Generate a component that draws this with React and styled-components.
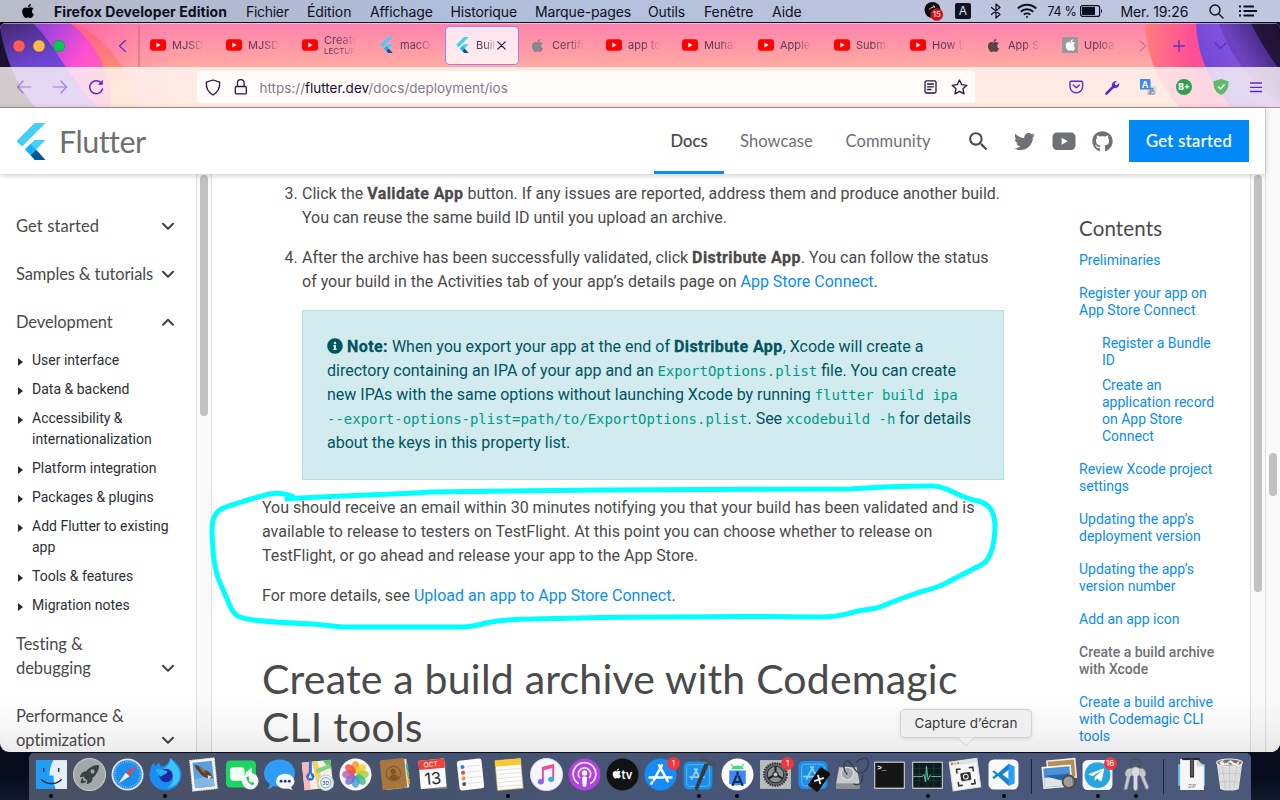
import React from 'react';
import styled, { createGlobalStyle, css } from 'styled-components';
import { FaApple, FaTwitter, FaGithub, FaInfoCircle, FaTelegramPlane } from 'react-icons/fa';
import { MdSearch } from 'react-icons/md';
import { IoRocketSharp } from 'react-icons/io5';

const Global = createGlobalStyle`
  *, *::before, *::after { box-sizing: border-box; }
  html, body { margin: 0; padding: 0; overflow: hidden; }
  svg { display: block; flex: none; }
`;

const roboto = "Roboto, 'Noto Sans', sans-serif";
const product = "Lato, 'Open Sans', sans-serif";
const system = "Inter, 'Noto Sans', sans-serif";
const blue = '#0a8cf5';

/* ---------- desktop ---------- */

const Desktop = styled.div`
  position: relative;
  width: 1280px;
  height: 800px;
  overflow: hidden;
  display: flex;
  flex-direction: column;
  background: linear-gradient(180deg, #0b1226, #060c1b 97%, #10182d);
  font-family: ${system};
`;

const MenuBar = styled.header`
  height: 22px;
  flex: none;
  display: flex;
  align-items: center;
  padding-left: 20px;
  background: linear-gradient(90deg, #b9bccb 0%, #b2b9cf 16%, #afbedb 35%, #bcc4dd 70%, #bec8df 100%);
  color: #0a1020;
  font-size: 14px;
`;

const MenuItem = styled.span`
  width: ${p => p.$w}px;
  flex: none;
  white-space: nowrap;
  font-weight: ${p => (p.$bold ? 700 : 400)};
  letter-spacing: ${p => p.$ls || 0}px;
  font-size: ${p => p.$size || 14}px;
`;

const MenuIcon = styled.span`
  width: ${p => p.$w}px;
  flex: none;
  display: flex;
`;

const Window = styled.section`
  position: relative;
  flex: none;
  width: 1280px;
  height: 729px;
  margin-top: 1px;
  border-radius: 6px 6px 9px 9px;
  overflow: hidden;
  display: flex;
  flex-direction: column;
  background: #fff;
`;

/* ---------- browser chrome ---------- */

const Chrome = styled.div`
  position: relative;
  height: 85px;
  flex: none;
  border-bottom: 1px solid #b98a8c;
  background: linear-gradient(180deg, #ff82ad 0%, #ffaaa2 52%, #ffb48c 100%);
`;

const ThemeArt = styled.svg`
  position: absolute;
  left: 0;
  top: 0;
`;

const ChromeRows = styled.div`
  position: relative;
  display: flex;
  flex-direction: column;
`;

const TabRow = styled.div`
  height: 44px;
  display: flex;
  align-items: center;
  border-top: 1px solid rgba(255, 255, 255, 0.45);
`;

const Lights = styled.div`
  display: flex;
  gap: 8px;
  padding-left: 13px;
  width: 118px;
`;

const Light = styled.span`
  width: 12px;
  height: 12px;
  border-radius: 50%;
  background: ${p => p.$c};
  box-shadow: inset 0 0 0 0.5px rgba(0, 0, 0, 0.25);
`;

const TabDivider = styled.span`
  width: 2px;
  height: 42px;
  margin: 0 1px 0 9px;
  background: rgba(190, 90, 110, 0.4);
`;

const Tab = styled.div`
  width: 76px;
  height: 37px;
  flex: none;
  margin-top: -1px;
  display: flex;
  align-items: center;
  padding-left: 9px;
  border-radius: 4px;
  ${p => p.$active && css`
    width: 72px;
    margin-right: 3px;
    margin-left: 1px;
    padding-left: 8px;
    background: rgba(255, 250, 252, 0.82);
    box-shadow: 0 0 0 1px #a97df2;
  `}
`;

const TabLabel = styled.span`
  width: ${p => (p.$narrow ? 21 : 36)}px;
  margin-left: 6px;
  overflow: hidden;
  white-space: nowrap;
  font-size: 11px;
  line-height: 12px;
  letter-spacing: 0;
  color: #66375a;
  mask-image: linear-gradient(90deg, #000 45%, transparent ${p => (p.$narrow ? 100 : 90)}%);
  small { display: block; font-size: 8px; line-height: 10px; letter-spacing: 0; }
`;

const Slot = styled.span`
  width: ${p => p.$w}px;
  flex: none;
  display: flex;
  justify-content: ${p => p.$align || 'flex-start'};
  align-items: center;
`;

const NavRow = styled.div`
  height: 40px;
  display: flex;
  align-items: center;
  padding-left: 16px;
  background: rgba(255, 250, 246, 0.8);
`;

const UrlBar = styled.div`
  width: 778px;
  height: 32px;
  flex: none;
  display: flex;
  align-items: center;
  padding-left: 8px;
  border-radius: 4px;
  background: #fffcfa;
`;

const Url = styled.span`
  flex: 1;
  padding-top: 1px;
  font-size: 13.5px;
  color: #84798f;
  b { font-weight: 400; color: #1d0b30; }
`;

/* ---------- page ---------- */

const Page = styled.div`
  flex: 1;
  display: flex;
  min-height: 0;
`;

const Site = styled.div`
  position: relative;
  flex: 1;
  display: flex;
  flex-direction: column;
  min-width: 0;
`;

const SiteHeader = styled.div`
  position: relative;
  z-index: 1;
  height: 66px;
  flex: none;
  display: flex;
  align-items: center;
  padding-left: 16px;
  background: #fff;
  box-shadow: 0 1px 6px rgba(0, 0, 0, 0.22);
  font-family: ${product};
`;

const Wordmark = styled.span`
  width: 595px;
  margin-left: 13px;
  font-size: 30.5px;
  line-height: 36px;
  letter-spacing: -0.5px;
  color: #6d7073;
`;

const NavLink = styled.a`
  height: 66px;
  width: ${p => p.$w}px;
  flex: none;
  padding-left: ${p => (p.$active ? 16.5 : 16)}px;
  line-height: 67px;
  font-size: 16.5px;
  letter-spacing: ${p => p.$ls || 0}px;
  color: ${p => (p.$active ? '#3f4245' : '#6d7073')};
  -webkit-text-stroke: ${p => (p.$active ? '0.2px' : '0')};
  box-shadow: ${p => (p.$active ? `inset 0 -3px 0 ${blue}` : 'none')};
`;

const StartButton = styled.button`
  width: 120px;
  height: 42px;
  flex: none;
  border: 0;
  padding: 0;
  background: #0389f7;
  color: #fff;
  font: 400 16.5px ${product};
  -webkit-text-stroke: 0.2px;
  letter-spacing: 0.4px;
`;

const Body = styled.div`
  flex: 1;
  display: flex;
  min-height: 0;
  overflow: hidden;
`;

const Sidebar = styled.nav`
  width: 196px;
  flex: none;
  padding: 28px 0 0 16px;
`;

const Section = styled.div`
  display: flex;
  justify-content: space-between;
  align-items: flex-end;
  width: 159px;
  padding: 12px 0;
  font: 400 16.5px/24px ${product};
  letter-spacing: ${p => p.$ls || 0}px;
  color: #4a4a4a;
  white-space: pre-line;
  svg { margin-bottom: 6px; }
`;

const SubItem = styled.div`
  display: flex;
  gap: 9px;
  padding: 4px 0 4px 2px;
  font: 400 14px/21px ${roboto};
  color: #2b2f33;
  white-space: pre-line;
  &::before {
    content: '';
    margin-top: 7.5px;
    width: 0;
    height: 0;
    flex: none;
    border: 4.5px solid transparent;
    border-left: 5px solid #2b2b2b;
    border-right: 0;
  }
`;

const Track = styled.div`
  width: ${p => p.$w || 15}px;
  flex: none;
  padding: ${p => p.$top}px 0 0 3px;
  background: #fafafa;
  border: solid #dedede;
  border-width: 0 ${p => (p.$closed ? 1 : 0)}px 0 1px;
`;

const Thumb = styled.div`
  width: 8px;
  height: ${p => p.$h}px;
  border-radius: 4px;
  background: #c1c1c1;
`;

const Article = styled.main`
  width: 867px;
  flex: none;
  padding: 8px 0 0 50px;
  font: 400 16px/24px ${roboto};
  color: #4a4a4a;
  white-space: nowrap;
  a { color: ${blue}; }
  b { font-weight: 700; letter-spacing: 0.42px; -webkit-text-stroke: 0.3px; }
`;

const Step = styled.div`
  display: flex;
  margin-bottom: 16px;
`;

const StepNumber = styled.span`
  width: 40px;
  padding-left: 22.5px;
`;

const P = styled.p`
  margin: 0 0 16px;
`;

const Note = styled.aside`
  width: 702px;
  margin: 0 0 16px 40px;
  padding: 24px;
  border: 1px solid #b4dfe5;
  background: #d1ebef;
  color: #00545f;
  svg { display: inline-block; vertical-align: -2px; }
  code { font: 14px/20px 'DejaVu Sans Mono', monospace; letter-spacing: -0.02px; color: #009b85; }
`;

const H2 = styled.h2`
  margin: 47px 0 0;
  font: 400 41px/48px ${product};
  letter-spacing: 0.21px;
  color: #4a4a4a;
`;

const Toc = styled.aside`
  width: 171px;
  flex: none;
  padding-top: 40px;
  font: 400 14px/17px ${roboto};
  color: ${blue};
  white-space: pre;
`;

const TocTitle = styled.div`
  font: 400 20.5px/29px ${product};
  letter-spacing: 0.15px;
  color: #4a4a4a;
  margin-bottom: 1px;
`;

const TocItem = styled.div`
  padding: ${p => (p.$sub ? '0 0 8px 23px' : '8px 0')};
  ${p => p.$active && css`
    color: #6d7073;
    font-weight: 500;
  `}
`;

const TocGroup = styled.div`
  padding-top: 8px;
`;

const BottomFade = styled.div`
  position: absolute;
  left: 0;
  right: 0;
  bottom: 0;
  height: 56px;
  background: linear-gradient(180deg, rgba(0, 0, 0, 0), rgba(0, 0, 0, 0.035) 60%, rgba(0, 0, 0, 0.08));
`;

const Scribble = styled.svg`
  position: absolute;
  left: 200px;
  top: 476px;
`;

const Tooltip = styled.div`
  position: absolute;
  left: 900px;
  top: 709px;
  width: 132px;
  height: 29px;
  border: 1px solid #d2d2d2;
  border-radius: 5px;
  background: #efefef;
  box-shadow: 0 1px 4px rgba(0, 0, 0, 0.12);
  font-size: 13.5px;
  line-height: 27px;
  letter-spacing: 0.08px;
  text-align: center;
  color: #3b3b3b;
  white-space: nowrap;
  svg { position: absolute; left: 56px; top: 27px; }
`;

/* ---------- dock ---------- */

const DockBar = styled.footer`
  width: 1222px;
  height: 47px;
  flex: none;
  margin: 1px 0 0 29px;
  padding: 5px 3px 0;
  display: flex;
  border-radius: 5px 5px 0 0;
  background: linear-gradient(90deg, #4a5065, #46536e 30%, #48567a 70%, #4b5879);
`;

const DockSlot = styled.div`
  position: relative;
  width: 38.12px;
  height: 42px;
  flex: none;
  display: flex;
  flex-direction: column;
  align-items: center;
  ${p => p.$running && css`
    &::after {
      content: '';
      width: 4px;
      height: 4px;
      margin-top: 3px;
      border-radius: 50%;
      background: #05070d;
    }
  `}
`;

const DockDivider = styled.div`
  width: 17.5px;
  flex: none;
  display: flex;
  justify-content: center;
  &::after { content: ''; width: 1px; height: 35px; margin-top: 1px; background: #1c2439; }
`;

const Badge = styled.span`
  position: absolute;
  right: 0px;
  top: -1px;
  width: 13px;
  height: 13px;
  border-radius: 50%;
  background: #f0373e;
  color: #fff;
  font-size: 8px;
  line-height: 13px;
  text-align: center;
`;

/* ---------- small drawings ---------- */

const YouTube = () => (
  <svg width="16" height="16" viewBox="0 0 16 16">
    <rect x="0" y="2.2" width="16" height="11.6" rx="3" fill="#f00" />
    <path d="M6.4 5.6 10.6 8 6.4 10.4z" fill="#fff" />
  </svg>
);

const Flutter = ({ w, h }) => (
  <svg width={w} height={h} viewBox="0 0 29 37">
    <path d="M18 0h11L5.6 23.6 0 18.2z" fill="#41d0fb" />
    <path d="M18 17h11L14 32 8.5 26.4z" fill="#41d0fb" />
    <path d="M14 32l5.5-5.5L29 37H18.2z" fill="#02569b" />
    <path d="M8.5 26.4 14 21l5.5 5.5L14 32z" fill="#0fb5f7" />
  </svg>
);

const Favicon = ({ kind }) => {
  if (kind === 'yt') return <YouTube />;
  if (kind === 'flutter') return <Slot $w={16} $align="center"><Flutter w={13} h={16} /></Slot>;
  if (kind === 'upload') return (
    <svg width="16" height="16" viewBox="0 0 16 16">
      <rect width="16" height="16" fill="#999" />
      <g transform="translate(2 1.5)"><FaApple size={13} color="#fff" /></g>
    </svg>
  );
  return <FaApple size={15} color={kind === 'apple2' ? '#594448' : '#8b8488'} />;
};

const Line = ({ w, h, d, c = '#5b2bc9', sw = 1.4, fill = 'none', box, o = 1 }) => (
  <svg width={w} height={h} viewBox={box || `0 0 ${w} ${h}`} fill={fill} stroke={c} strokeWidth={sw} strokeLinecap="round" strokeLinejoin="round" opacity={o}>
    <path d={d} />
  </svg>
);

const Chevron = ({ up }) => (
  <Line w={13} h={12} c="#444" sw={2} d={up ? 'M1 8.7 6 3.7l5 5' : 'M1 3.7l5 5 5-5'} />
);

const Art = () => (
  <ThemeArt width="1280" height="84" viewBox="0 23 1280 84">
    <defs>
      <linearGradient id="pinkL" x1="0" y1="0" x2="1" y2="0.5">
        <stop offset="0" stopColor="#6a3acb" />
        <stop offset="0.45" stopColor="#b545dd" />
        <stop offset="0.75" stopColor="#ff4fd0" />
        <stop offset="1" stopColor="#ff5fae" />
      </linearGradient>
      <linearGradient id="purL" x1="0" y1="0" x2="0.4" y2="1">
        <stop offset="0" stopColor="#43286f" />
        <stop offset="0.5" stopColor="#6a43cf" />
        <stop offset="1" stopColor="#8353ec" />
      </linearGradient>
      <linearGradient id="warmL" x1="0" y1="0" x2="0.3" y2="1">
        <stop offset="0" stopColor="#ff4f8e" />
        <stop offset="0.65" stopColor="#ff8278" />
        <stop offset="1" stopColor="#ffa565" />
      </linearGradient>
      <linearGradient id="glowL" x1="0" y1="0" x2="1" y2="0">
        <stop offset="0" stopColor="#ff4a92" />
        <stop offset="1" stopColor="#ff82ad" stopOpacity="0" />
      </linearGradient>
      <linearGradient id="warmR" x1="0" y1="0" x2="1" y2="0">
        <stop offset="0" stopColor="#ff7c7c" />
        <stop offset="0.35" stopColor="#ff4f94" />
        <stop offset="1" stopColor="#ff45b0" />
      </linearGradient>
      <linearGradient id="purR" x1="0" y1="0.6" x2="1" y2="0">
        <stop offset="0" stopColor="#6c46d6" />
        <stop offset="0.5" stopColor="#8352dd" />
        <stop offset="0.8" stopColor="#4d2e8c" />
        <stop offset="1" stopColor="#251440" />
      </linearGradient>
    </defs>
    <rect x="60" y="23" width="120" height="84" fill="url(#glowL)" opacity="0.7" />
    <path d="M0 23H73C106 38 131 68 134 107H0z" fill="url(#warmL)" />
    <path d="M0 23H70C92 40 111 66 111 107H0z" fill="url(#pinkL)" />
    <path d="M0 23H33C55 45 66 74 98 107H0z" fill="url(#purL)" />
    <path d="M0 28C6 60 16 84 35 107H0z" fill="#1c1030" />
    <path d="M1145 23C1146 52 1157 82 1179 107H1280V23z" fill="url(#warmR)" />
    <path d="M1196 23C1197 55 1210 85 1232 107H1280V23z" fill="url(#purR)" />
    <path d="M1219 23C1230 55 1252 85 1280 104V23z" fill="#2b1360" opacity="0.25" />
    <path d="M1251 23C1258 38 1269 56 1280 70V23z" fill="#1f102e" opacity="0.85" />
  </ThemeArt>
);

/* ---------- dock icons, all on a 32 unit canvas ---------- */

const Round = ({ c, stroke }) => <circle cx="16" cy="16" r="15.5" fill={c} stroke={stroke || 'none'} />;
const petals = ['#f7941d', '#f5d020', '#a6ce39', '#3fb97a', '#3ba0dd', '#6f6bd0', '#b65ab8', '#ef4a3e'];

const art = {
  finder: <>
    <rect x="1" y="2" width="30" height="28" fill="#e6eff8" />
    <path d="M1 2h17c-3 5-4 10-4 15h4c0 5 .5 9 2 13H1z" fill="#1f9df5" />
    <path d="M8.5 10v3M23 10v3M6.500 21c5 5 14 5 19 0" fill="none" stroke="#12263d" strokeWidth="1.300" strokeLinecap="round" />
  </>,
  launchpad: <><Round c="#a3a8a8" stroke="#c9cccc" /><g transform="translate(5.500 5.500)"><IoRocketSharp size={21} color="#3c4042" /></g></>,
  safari: <><Round c="#dfe5ea" /><circle cx="16" cy="16" r="13.800" fill="#1c8fee" /><circle cx="16" cy="16" r="12.300" fill="none" stroke="#a9dbff" strokeWidth="1.600" strokeDasharray=".5 1.400" /><path d="M25 7 17.800 17.700 14.300 14.300z" fill="#f5413b" /><path d="M7 25 17.800 17.700 14.300 14.300z" fill="#f4f6f8" /></>,
  firefox: <>
    <path d="M21 0c5 4 11 9 10.500 17C31 25 24 31.500 16 31.500S.5 25 .5 17C.5 12 2 7 5 4l1 4 4-4c0 3 2 4 4 4 4-1 5-5 7-8z" fill="#1a8df0" />
    <path d="M21 0c4 6 9 9 9 17 0 6-5 12-13 12 6-3 8-8 5-13-2-4-6-3-8-6 4-1 6-5 7-10z" fill="#3dc3fa" />
    <circle cx="16.500" cy="17" r="6.500" fill="#1e2a9c" /><path d="M7 11c4-1 7 1 11 2-1 3-5 3-6 5-3-1-5-4-5-7z" fill="#27b1f5" />
  </>,
  mail: <g transform="rotate(-6 16 16)"><rect x="4" y="1" width="24" height="30" fill="#f7f7f2" stroke="#e2e2da" strokeDasharray="1.500 1" /><rect x="6.500" y="3.500" width="19" height="25" fill="#5c9fe0" /><path d="M6.500 20l19-3v11.500h-19z" fill="#82b6e6" /><path d="M8 6c4 0 7 3 9 6 4 0 6 3 8 8-5 1-9-1-12-5-2-3-4-6-5-9z" fill="#5d4227" /><path d="M12 7c3 2 5 4 7 8l-4-2z" fill="#94713f" /><path d="M20 17l4 2-4 2z" fill="#e9e2cf" /></g>,
  facetime: <><rect x="1" y="2.500" width="29" height="26" rx="4" fill="#1fd562" /><rect x="5" y="9" width="14" height="13" rx="3" fill="#f3fff6" /><path d="M20 14l6-5v13l-6-5z" fill="#e2f8e8" /><circle cx="24.500" cy="22.500" r="8" fill="#f4f4f4" /><path d="M20.500 19c1 4 3 6.500 6.500 7.500l1.500-2-2.200-1.500-1.200.8c-1-.6-1.800-1.400-2.200-2.500l.9-1-1.200-2.500z" fill="#29c75c" /></>,
  messages: <><path d="M16 1.500c9 0 15 6 15 13.500S25 28 16 28c-2 0-4-.3-5.500-1C9 29 7 30 4.500 30c1.500-1.500 2-3 2-5C3 22.500 1 19 1 15 1 7.500 7 1.500 16 1.500z" fill="#2f9df7" /><ellipse cx="21.500" cy="22.500" rx="9" ry="7.300" fill="#f7fbff" /><path d="M26 27l3 4-6-2z" fill="#f7fbff" /><g fill="#1a3f8a"><circle cx="17.500" cy="22.500" r="1.400" /><circle cx="21.500" cy="22.500" r="1.400" /><circle cx="25.500" cy="22.500" r="1.400" /></g></>,
  maps: <><g transform="rotate(-6 16 16)"><rect x="2" y="3" width="28" height="27" fill="#f4f1e9" /><path d="M2 3h6v27H2z" fill="#f9b7b8" /><path d="M22 3h8v10z" fill="#63c466" /><path d="M12 3l3 27h6L17 3z" fill="#f7d35c" /><path d="M15 13l14-4" stroke="#8ccf8b" strokeWidth="4" /></g><circle cx="9" cy="18" r="4" fill="#2c6ede" /><path d="M9 3.500V16" stroke="#2c6ede" strokeWidth="3" /><path d="M9 15l2 5-2-1-2 1z" fill="#fff" /><circle cx="24" cy="24" r="7.500" fill="#eef3f7" stroke="#bac8d4" /><circle cx="24" cy="24" r="5" fill="none" stroke="#6b93b8" strokeWidth=".8" /><text x="24" y="25.800" fontSize="5" textAnchor="middle" fill="#345">3D</text></>,
  photos: <><Round c="#f6f6f3" />{petals.map((c, i) => <ellipse key={c} cx="16" cy="9" rx="4" ry="6" fill={c} opacity=".8" transform={`rotate(${i * 45} 16 16)`} />)}</>,
  contacts: <g transform="rotate(-6 16 16)"><rect x="7" y="2" width="22" height="28" rx="1" fill="#ece6d8" /><path d="M28 7h2v6h-2z" fill="#3cb0b0" /><path d="M28 14h2v6h-2z" fill="#7bbf4a" /><path d="M28 21h2v6h-2z" fill="#f0a338" /><rect x="3" y="1" width="24" height="29" rx="1.500" fill="#a8763f" /><circle cx="15" cy="15" r="7" fill="none" stroke="#83562a" /><circle cx="15" cy="13" r="2.800" fill="#83562a" /><path d="M10 19c2-4 8-4 10 0-3 3-7 3-10 0z" fill="#83562a" /></g>,
  calendar: <g transform="rotate(-5 16 16)"><path d="M4 29l25 2V5z" fill="#7d858b" /><rect x="3.500" y="1.500" width="25" height="27.500" rx="1" fill="#fbfbfb" /><path d="M3.500 1.500h25v9h-25z" fill="#ee4239" /><text x="16" y="8.500" fontSize="6.500" textAnchor="middle" fill="#fff">OCT.</text><text x="16" y="25.500" fontSize="16" textAnchor="middle" fill="#2a2a2a">13</text></g>,
  reminders: <g transform="rotate(-6 16 16)"><rect x="4" y="1.500" width="24" height="29" rx="2.500" fill="#fbfbfb" />{['#2d7ff5', '#ee4543', '#f39a37', '#4d5967'].map((c, i) => <g key={c}><circle cx="9" cy={8 + i * 5.500} r="2" fill={c} /><path d={`M13 ${8 + i * 5.500}h13`} stroke="#d8d8d8" strokeWidth=".7" /></g>)}</g>,
  notes: <g transform="rotate(-5 16 16)"><rect x="4" y="1.500" width="25" height="29" fill="#fdfdfb" stroke="#c9a24a" strokeWidth=".6" /><path d="M4 1.500h25v6H4z" fill="#fbc935" /><path d="M4 11h25M4 15h25M4 19h25M4 23h25M4 27h25" stroke="#d9d9d6" strokeWidth=".7" /></g>,
  music: <><Round c="#f6f6fa" stroke="#dcdce4" /><path d="M12.500 22.500V9.500l10-2.500v13" fill="none" stroke="#e5489b" strokeWidth="1.800" /><path d="M12.500 10.500l10-2.500" stroke="#f0508c" strokeWidth="3" /><ellipse cx="10.500" cy="23" rx="3" ry="2.600" fill="#7d6cf0" /><ellipse cx="20.500" cy="20.700" rx="3" ry="2.600" fill="#42a5f5" /></>,
  podcasts: <><Round c="#b142de" /><g fill="none" stroke="#f5e4ff" strokeWidth="1.700"><path d="M10.500 25a11 11 0 1 1 11 0" /><path d="M11.500 19.500a6 6 0 1 1 9 0" /></g><circle cx="16" cy="14.500" r="2.600" fill="#fff" /><path d="M13.500 20c0-3 5-3 5 0l-.8 7c-.3 1.500-3.100 1.500-3.400 0z" fill="#fff" /></>,
  appletv: <><Round c="#111214" /><g transform="translate(5 9.500)"><FaApple size={11} color="#fff" /></g><text x="15" y="20" fontSize="11" fontWeight="600" fill="#fff">tv</text></>,
  appstore: <><Round c="#168cf7" /><g stroke="#fff" strokeWidth="2.400" strokeLinecap="round"><path d="M17.500 7 9.500 21.500M14.500 7l8.500 15.500M5.500 19h13M22 19h4.500M8 23.500l-.8 1.300" /></g></>,
  xcode: <><rect x="1.500" y="3.500" width="28" height="27" rx="5" fill="#1d8fe8" /><rect x="4.500" y="6.500" width="22" height="21" rx="3" fill="none" stroke="#74c3fb" strokeWidth=".7" /><path d="M15 10 9 21M12 10l7 12M7 18.500h15" stroke="#8fd2ff" strokeWidth="1.700" /><path d="M22 5 12 30l3 1.500L26 6z" fill="#37393d" /><path d="M16 1c5-1.500 10-1 13 2l4 2-1.500 4-5-2-3-3-7-1z" fill="#4b4e53" /></>,
  android: <><Round c="#fbfcfb" /><path d="M10 11c1-5 11-5 12 0z" fill="#3ddc84" /><path d="M10 6l2 3M22 6l-2 3" stroke="#3ddc84" strokeWidth="1.200" /><path d="M8 12h16v13c-5 2-11 2-16 0z" fill="#4285f4" /><path d="M16 13v4M15 17l-4 10M17 17l4 10M12 22c3 2 5 2 8 0" fill="none" stroke="#0b2c48" strokeWidth="2" /></>,
  settings: <><rect x="1" y="2" width="30" height="28" fill="#b9bcbd" /><circle cx="16" cy="16" r="11" fill="#66696b" stroke="#2d2f31" strokeWidth="2" strokeDasharray="1.400 1" /><circle cx="16" cy="16" r="8" fill="#8d9193" stroke="#2b2d2f" /><path d="M16 16V8M16 16l7 4M16 16l-7 4" stroke="#222" strokeWidth="2" /><circle cx="16" cy="16" r="2.500" fill="#c6c9ca" stroke="#222" /></>,
  simulator: <><rect x="1.500" y="3" width="28" height="27" rx="5" fill="#1d8fe8" /><rect x="4.500" y="6" width="22" height="21" rx="3" fill="none" stroke="#74c3fb" strokeWidth=".7" /><path d="M16 8 9 21M13 8l6 9M6 18h12" stroke="#8fd2ff" strokeWidth="1.700" /><g transform="rotate(35 22 20)"><rect x="16" y="10" width="12" height="22" rx="1.500" fill="#111" /><path d="M18.500 18l7 6M25 17l-6 8" stroke="#e8e8e8" strokeWidth="1.800" /></g></>,
  disk: <><path d="M4 9h17l3 16H1z" fill="#c6c9cb" /><path d="M1 25h23v5H1z" fill="#8e9294" /><circle cx="12" cy="15" r="6" fill="#a4a8aa" stroke="#dfe1e2" /><path d="M12 16c-4-4-5-10-1-13 4-1 5 4 9 9 3 4 9 3 12-4 1-4 1-7-3-8M20 5c2-4 6-4 9-5M27 16c0 8-4 12-9 9" fill="none" stroke="#3a3d40" strokeWidth="1.300" /></>,
  terminal: <><rect x="1" y="3.500" width="30" height="26.500" rx="1" fill="#bfc1c2" /><rect x="2.200" y="4.700" width="27.600" height="24" fill="#151617" /><text x="4.200" y="12" fontSize="7.500" fontFamily="Liberation Mono, monospace" fontWeight="700" fill="#fff">&gt;_</text></>,
  activity: <><rect x="1" y="3.500" width="30" height="26.500" rx="1" fill="#bfc1c2" /><rect x="2.200" y="4.700" width="27.600" height="24" fill="#0d1d1c" /><path d="M2 10h28M2 16h28M2 22h28M8 5v24M15 5v24M22 5v24" stroke="#244a44" strokeWidth=".5" /><path d="M2 18h9l1.500-2L14 23l1-15 1.500 13 2-4 1.500 1h9" fill="none" stroke="#6fd9bd" strokeWidth=".8" /></>,
  capture: <g transform="rotate(-8 16 16)"><rect x="2" y="2" width="27" height="28" fill="#f5f5f5" stroke="#ddd" /><path d="M2 2h27v4H2z" fill="#e2e2e2" /><circle cx="4.500" cy="4" r="1" fill="#ee4a41" /><circle cx="7.500" cy="4" r="1" fill="#f5b52f" /><circle cx="10.500" cy="4" r="1" fill="#44c248" /><path d="M8 14v-4h4M20 10h4v4M24 22v4h-4M12 26H8v-4" fill="none" stroke="#333" strokeWidth="1.500" /><rect x="11" y="14" width="10" height="8" rx="1.500" fill="#333" /><circle cx="16" cy="18" r="2.300" fill="#333" stroke="#eee" /></g>,
  vscode: <><rect x="1.500" y="1.500" width="29" height="29" rx="5" fill="#f8f9fb" /><path d="M21 5.500 10.500 15 7 12l-2 1 3.500 3L5 19l2 1.300 3.500-2.800L21 27l5.500-2.500v-16zm0 6v9L15 16z" fill="#1680d2" fillRule="evenodd" /><path d="M21 5.500l5.500 3v16L21 27z" fill="#2aa0f2" /></>,
  preview: <><g transform="rotate(-5 16 16)"><rect x="5" y="2" width="27" height="18" fill="#b98e55" stroke="#f3eee1" strokeWidth="1.500" /><rect x="0" y="8" width="27" height="20" fill="#4a92d8" stroke="#fafafa" strokeWidth="1.500" /><path d="M1 18h25v9H1z" fill="#dfe7ea" /><path d="M1 16h25l-9 6z" fill="#2767a5" /></g><circle cx="25" cy="23" r="6" fill="#8b8778" fillOpacity=".75" stroke="#4f4b42" strokeWidth="1.800" /></>,
  telegram: <><rect x="1.500" y="2" width="29" height="29" rx="5" fill="#f4f6f8" /><circle cx="16" cy="16.500" r="12.500" fill="#27a5e1" /><g transform="translate(6.500 8)"><FaTelegramPlane size={17} color="#fff" /></g></>,
  keys: <g fill="#c3c8cb" stroke="#80868b" strokeWidth=".5"><circle cx="16" cy="5.500" r="4.800" fill="none" stroke="#4b4f54" strokeWidth="1.500" /><path d="M7 12c2-3 7-3 7 1 0 3-2 4-3 5L8 30l-3 1 .5-4 2-9c-2-1-2-4-.5-6z" /><path d="M25 12c-2-3-7-3-7 1 0 3 2 4 3 5l5 12 2 .5.5-3-4-9.500c2-1 2-4 .5-6z" /><path d="M12 11c1-3 7-3 8 0 1 4-1 6-2 7v12l-2 2-2-2V18c-1-1-3-3-2-7z" fill="#d8dcde" /></g>,
  zip: <><path d="M3 6h26v21H3z" fill="#5fc6ec" /><path d="M5 1h16l7 7v23H5z" fill="#f6f6f6" /><path d="M21 1v7h7z" fill="#d4d4d4" /><path d="M7 0h17v2H7z" fill="#23282e" /><path d="M14.500 1h4v18h-4z" fill="#3a3d40" /><path d="M16.500 2v16" stroke="#aaa" strokeDasharray="1 1" /><text x="16.500" y="29" fontSize="5" textAnchor="middle" fill="#666">ZIP</text></>,
  trash: <><path d="M3.500 4h25l-3.500 26c-4 2-14 2-18 0z" fill="#dcdedd" /><path d="M9 8l3 22M16 8v23M23 8l-3 22M6 15h20M7 23h18" stroke="#c3c6c6" strokeWidth=".8" /><ellipse cx="16" cy="4.500" rx="12.500" ry="3.500" fill="#70757b" stroke="#eee" /><path d="M6 4l4-2 3 3 4-3 4 3 5-2-2 4H8z" fill="#f1eee8" /><path d="M10 3l2 2M21 3l2 2" stroke="#d24b3e" strokeWidth="1.500" /><path d="M15 5l3 1" stroke="#3a81c4" strokeWidth="1.500" /></>,
};

const dockItems = [
  ['finder', 1], ['launchpad'], ['safari'], ['firefox', 1], ['mail'], ['facetime'], ['messages'], ['maps'],
  ['photos'], ['contacts'], ['calendar'], ['reminders'], ['notes', 1], ['music'], ['podcasts'], ['appletv'],
  ['appstore', 0, '1'], ['xcode', 1], ['android', 1], ['settings', 0, '1'], ['simulator'], ['disk'],
  ['terminal'], ['activity', 1], ['capture'], ['vscode', 1], ['|'], ['preview'], ['telegram', 1, '16'],
  ['keys', 1], ['|'], ['zip'], ['trash'],
];

const tabs = [
  ['yt', 'MJSD'], ['yt', 'MJSD'], ['yt', 'Create', 'LECTUR'], ['flutter', 'macOS'], ['flutter', 'Buil', null, true],
  ['apple', 'Certifi'], ['yt', 'app to'], ['yt', 'Muhar'], ['yt', 'Apple'], ['yt', 'Submi'], ['yt', 'How to'],
  ['apple2', 'App S'], ['upload', 'Uploa'],
];

const menus = [
  ['Firefox Developer Edition', 192, 0.07, true], ['Fichier', 61, -0.3], ['Édition', 63, -0.1], ['Affichage', 80.5, -0.1],
  ['Historique', 84.5, -0.15], ['Marque-pages', 113, -0.15], ['Outils', 56, -0.1], ['Fenêtre', 68, -0.1], ['Aide', 152, -0.1],
];

const toc = [
  ['Preliminaries'], ['Register your app on\nApp Store Connect'], ['Register a Bundle\nID', 'sub', true],
  ['Create an\napplication record\non App Store\nConnect', 'sub'], ['Review Xcode project\nsettings'],
  ['Updating the app’s\ndeployment version'], ['Updating the app’s\nversion number'], ['Add an app icon'],
  ['Create a build archive\nwith Xcode', 'active'], ['Create a build archive\nwith Codemagic CLI\ntools'],
];

export default function App() {
  return (
    <Desktop>
      <Global />
      <MenuBar>
        <MenuIcon $w={34}><FaApple size={16} color="#05070d" /></MenuIcon>
        {menus.map(([t, w, ls, bold]) => <MenuItem key={t} $w={w} $ls={ls} $bold={bold}>{t}</MenuItem>)}
        <MenuIcon $w={31}>
          <svg width="20" height="20" viewBox="0 0 20 20">
            <circle cx="8.500" cy="9" r="8" fill="#0b0b0e" />
            <path d="M5 8.500c2-2 4-2.500 6-2.500l-2-1.500" stroke="#ddd" fill="none" />
            <circle cx="12.800" cy="13.500" r="6.300" fill="#cf1016" />
            <text x="12.800" y="16.300" fontSize="8" textAnchor="middle" fill="#fff">15</text>
          </svg>
        </MenuIcon>
        <MenuIcon $w={35}>
          <svg width="16" height="16" viewBox="0 0 16 16">
            <rect width="16" height="16" rx="2" fill="#0c1322" />
            <text x="8" y="12.300" fontSize="12" textAnchor="middle" fill="#dfe4f0">A</text>
          </svg>
        </MenuIcon>
        <MenuIcon $w={27}><Line w={12} h={16} c="#0a1020" sw={1.2} d="M1.500 4.500 10 11.500 6 15V1l4 3.500-8.500 7" /></MenuIcon>
        <MenuIcon $w={30.5}>
          <svg width="20" height="16" viewBox="0 0 20 16" fill="none" stroke="#0a1020" strokeWidth="1.900">
            <path d="M.8 5.500a13 13 0 0 1 18.400 0M3.800 8.700a9 9 0 0 1 12.400 0M6.800 11.600a4.800 4.800 0 0 1 6.400 0" />
            <circle cx="10" cy="14" r="1" fill="#0a1020" stroke="none" />
          </svg>
        </MenuIcon>
        <MenuItem $w={32} $size={12.5} $ls={-0.35}>74 %</MenuItem>
        <MenuIcon $w={41}>
          <svg width="24" height="12" viewBox="0 0 24 12">
            <rect x=".6" y=".6" width="19" height="10.800" rx="2" fill="none" stroke="#0a1020" strokeWidth="1.200" />
            <rect x="2" y="2" width="13" height="8" fill="#0a1020" />
            <path d="M21 4c1.500.5 1.500 3.500 0 4z" fill="#0a1020" />
          </svg>
        </MenuIcon>
        <MenuItem $w={88} $ls={-0.1}>Mer. 19:26</MenuItem>
        <MenuIcon $w={30}><Line w={15} h={15} c="#0a1020" sw={1.4} d="M6 1a5 5 0 1 1 0 10A5 5 0 0 1 6 1M9.700 9.700 14 14" /></MenuIcon>
        <MenuIcon $w={20}>
          <svg width="18" height="12" viewBox="0 0 18 12" stroke="#0a1020" strokeWidth="1.800">
            <path d="M0 1.500h2M4.500 1.500H15M0 6h2M4.500 6H18M0 10.500h2M4.500 10.500H15" />
          </svg>
        </MenuIcon>
      </MenuBar>

      <Window>
        <Chrome>
          <Art />
          <ChromeRows>
            <TabRow>
              <Lights><Light $c="#ff5d57" /><Light $c="#ffbb45" /><Light $c="#0cc254" /></Lights>
              <Slot $w={11}><Line w={9} h={14} sw={1.2} d="M7.500 1.500 1.500 7l6 5.500" /></Slot>
              <TabDivider />
              {tabs.map(([kind, label, sub, active], i) => (
                <Tab key={i} $active={active}>
                  <Slot $w={16}><Favicon kind={kind} /></Slot>
                  <TabLabel $narrow={active}>{label}{sub && <small>{sub}</small>}</TabLabel>
                  {active && <Line w={9} h={9} c="#2a1540" sw={1.2} d="M.8.8l7.400 7.400M8.200.8.8 8.200" />}
                </Tab>
              ))}
              <Slot $w={44}><Slot $w={10} /><Line w={8} h={12} o={0.35} sw={1.2} d="M1 1l6 5-6 5" /></Slot>
              <Slot $w={40.5}><Line w={12} h={12} sw={1.3} d="M6 .7v10.600M.7 6h10.600" /></Slot>
              <Line w={13} h={8} sw={1.2} d="M1 1l5.500 5.500L12 1" />
            </TabRow>
            <NavRow>
              <Slot $w={36}><Line w={16} h={14} o={0.5} sw={1.2} d="M7 1 1.500 7 7 13M1.500 7H15" /></Slot>
              <Slot $w={36}><Line w={16} h={14} o={0.5} sw={1.2} d="M9 1l5.500 6L9 13M14.500 7H1" /></Slot>
              <Slot $w={109}>
                <svg width="17" height="16" viewBox="0 0 17 16" fill="none" stroke="#5b2bc9" strokeWidth="1.500" strokeLinecap="round">
                  <path d="M14.500 10a6.500 6.500 0 1 1-1.500-6.300" /><path d="M14.800.8v5h-5z" fill="#5b2bc9" stroke="none" />
                </svg>
              </Slot>
              <UrlBar>
                <Slot $w={29}><Line w={16} h={17} c="#2b1540" sw={1.3} d="M8 1 14.700 3.200C15 9 12.500 13.500 8 16 3.500 13.500 1 9 1.300 3.200z" /></Slot>
                <Slot $w={25.5}><Line w={14} h={16} c="#2b1540" sw={1.3} d="M2.500 7.500h8.600a1.200 1.200 0 0 1 1.200 1.200v5a1.200 1.200 0 0 1-1.200 1.200H2.500a1.200 1.200 0 0 1-1.200-1.200v-5a1.200 1.200 0 0 1 1.200-1.200M3.500 7.500V4a3.300 3.300 0 0 1 6.600 0v3.500" /></Slot>
                <Url>https://<b>flutter.dev</b>/docs/deployment/ios</Url>
                <Slot $w={27}><Line w={13} h={14} c="#2b1540" sw={1.3} d="M2.500.8h8a1.500 1.500 0 0 1 1.500 1.500v9.200a1.500 1.500 0 0 1-1.500 1.500h-8A1.500 1.500 0 0 1 1 11.500V2.300A1.500 1.500 0 0 1 2.500.8M3.500 4h6M3.500 6.800h6M3.500 9.500h3.500" /></Slot>
                <Slot $w={24}><Line w={17} h={16} c="#2b1540" sw={1.3} d="M8.500 1l2.200 4.700 5.100.6-3.800 3.500 1 5.100-4.500-2.500L4 14.900l1-5.100L1.200 6.300l5.100-.6z" /></Slot>
              </UrlBar>
              <Slot $w={94} />
              <Slot $w={36}><Line w={15} h={14} sw={1.4} d="M2 1.200h10.600a1 1 0 0 1 1 1V6.500a6.300 6.300 0 0 1-12.600 0V2.200a1 1 0 0 1 1-1M4.300 5l3 2.800 3-2.800" /></Slot>
              <Slot $w={35}>
                <svg width="15" height="15" viewBox="0 0 15 15"><path d="M1.500 13.500 8.500 6.500" stroke="#5b2bc9" strokeWidth="2.600" strokeLinecap="round" /><path d="M7 6.800C6 3.500 8.500.5 12 1L9.800 3.300l.3 1.700 1.700.3L14.200 3c.6 3.500-2.400 6-5.700 5z" fill="#5b2bc9" /></svg>
              </Slot>
              <Slot $w={36}>
                <svg width="16" height="16" viewBox="0 0 16 16"><rect x="7" y="7" width="9" height="9" fill="#d7dbe2" /><text x="7.500" y="14.500" fontSize="7.500" fontFamily="Noto Sans CJK JP" fill="#4c6270">あ</text><rect width="10.500" height="10.500" fill="#3f86ee" /><text x="5.200" y="8.600" fontSize="9" fontWeight="700" textAnchor="middle" fill="#fff">A</text></svg>
              </Slot>
              <Slot $w={36.5}>
                <svg width="16" height="16" viewBox="0 0 16 16"><circle cx="8" cy="8" r="8" fill="#2f9e4f" /><text x="8" y="11" fontSize="8.500" fontWeight="800" textAnchor="middle" fill="#fff">B+</text></svg>
              </Slot>
              <Slot $w={37.5}>
                <svg width="16" height="16" viewBox="0 0 16 16"><path d="M8 0l7.500 2.200C15.800 8.500 13.500 13.500 8 16 2.500 13.500.2 8.500.5 2.200z" fill="#5dbb6a" /><path d="M5 7.500l2.500 2.500L11.500 5.500" fill="none" stroke="#fff" strokeWidth="1.500" /></svg>
              </Slot>
              <Line w={12} h={12} sw={1.3} d="M.5 2h11M.5 6.300h11M.5 10.500h11" />
            </NavRow>
          </ChromeRows>
        </Chrome>

        <Page>
          <Site>
            <SiteHeader>
              <Flutter w={30} h={37} />
              <Wordmark>Flutter</Wordmark>
              <NavLink $w={70} $active $ls={0.1}>Docs</NavLink>
              <NavLink $w={105.5} $ls={0.1}>Showcase</NavLink>
              <NavLink $w={136} $ls={0.1}>Community</NavLink>
              <Slot $w={48.5}><MdSearch size={25} color="#4a4a4a" /></Slot>
              <Slot $w={38}><FaTwitter size={21} color="#6e7276" /></Slot>
              <Slot $w={40}>
                <svg width="24" height="20" viewBox="0 0 24 20"><rect x=".5" y="1.500" width="23" height="17.500" rx="4.500" fill="#6e7276" /><path d="M9.700 6.700v7l6-3.500z" fill="#fff" /></svg>
              </Slot>
              <Slot $w={37}><FaGithub size={21} color="#6e7276" /></Slot>
              <StartButton>Get started</StartButton>
            </SiteHeader>

            <Body>
              <Sidebar>
                <Section $ls={0.12}>Get started<Chevron /></Section>
                <Section $ls={-0.12}>Samples &amp; tutorials<Chevron /></Section>
                <Section $ls={-0.1}>Development<Chevron up /></Section>
                {['User interface', 'Data & backend', 'Accessibility &\ninternationalization', 'Platform integration', 'Packages & plugins', 'Add Flutter to existing\napp', 'Tools & features', 'Migration notes'].map(t => <SubItem key={t}>{t}</SubItem>)}
                <Section $ls={-0.05}>{'Testing &\ndebugging'}<Chevron /></Section>
                <Section $ls={-0.05}>{'Performance &\noptimization'}<Chevron /></Section>
              </Sidebar>
              <Track $w={16} $closed $top={1}><Thumb $h={241} /></Track>

              <Article>
                <Step>
                  <StepNumber>3.</StepNumber>
                  <div>Click the <b>Validate App</b> button. If any issues are reported, address them and produce another build.<br />You can reuse the same build ID until you upload an archive.</div>
                </Step>
                <Step>
                  <StepNumber>4.</StepNumber>
                  <div>After the archive has been successfully validated, click <b>Distribute App</b>. You can follow the status<br />of your build in the Activities tab of your app’s details page on <a>App Store Connect</a>.</div>
                </Step>
                <Note>
                  <FaInfoCircle size={16} /> <b>Note:</b> When you export your app at the end of <b>Distribute App</b>, Xcode will create a<br />
                  directory containing an IPA of your app and an <code>ExportOptions.plist</code> file. You can create<br />
                  new IPAs with the same options without launching Xcode by running <code>flutter build ipa</code><br />
                  <code>--export-options-plist=path/to/ExportOptions.plist</code>. See <code>xcodebuild -h</code> for details<br />
                  about the keys in this property list.
                </Note>
                <P>You should receive an email within 30 minutes notifying you that your build has been validated and is<br />available to release to testers on TestFlight. At this point you can choose whether to release on<br />TestFlight, or go ahead and release your app to the App Store.</P>
                <P>For more details, see <a>Upload an app to App Store Connect</a>.</P>
                <H2>Create a build archive with Codemagic<br />CLI tools</H2>
              </Article>

              <Toc>
                <TocTitle>Contents</TocTitle>
                {toc.map(([t, kind, lead], i) => {
                  const item = <TocItem key={i} $sub={kind === 'sub'} $active={kind === 'active'}>{t}</TocItem>;
                  return lead ? <TocGroup key={i}>{item}</TocGroup> : item;
                })}
              </Toc>
              <Track $top={1}><Thumb $h={417} /></Track>
            </Body>
          </Site>
          <Track $top={345}><Thumb $h={43} /></Track>
        </Page>
        <BottomFade />
      </Window>

      <DockBar>
        {dockItems.map(([name, running, badge], i) => name === '|' ? <DockDivider key={i} /> : (
          <DockSlot key={i} $running={running}>
            <svg width="33" height="33" viewBox="0 0 32 32" overflow="visible">{art[name]}</svg>
            {badge && <Badge>{badge}</Badge>}
          </DockSlot>
        ))}
      </DockBar>

      <Scribble width="810" height="160" viewBox="200 476 810 160" fill="none" stroke="#00ffff" strokeWidth="5" strokeLinejoin="round">
        <path d="M285 499C340 495 390 495 430 492Q520 491 600 490Q720 490 850 489Q890 486 933 486C948 486 957 497 978 501C989 504 994 510 995 525C995 540 992 560 981 565L948 582Q940 587 920 592L900 599L877 608L858 611C845 614 840 617 820 617Q740 616 670 617Q600 617 533 619Q505 619 486 623Q473 627 460 627H342L313 624Q270 622 253 620C240 618 235 617 230 606L218 578Q213 560 213 548Q211 530 213 520C217 509 222 508 235 504Q250 499 262 496C272 492 282 492 294 497" />
      </Scribble>

      <Tooltip>
        Capture d’écran
        <svg width="18" height="10" viewBox="0 0 18 10"><path d="M1 0.500 9 9l8-8.500" fill="#efefef" stroke="#d2d2d2" /></svg>
      </Tooltip>
    </Desktop>
  );
}
